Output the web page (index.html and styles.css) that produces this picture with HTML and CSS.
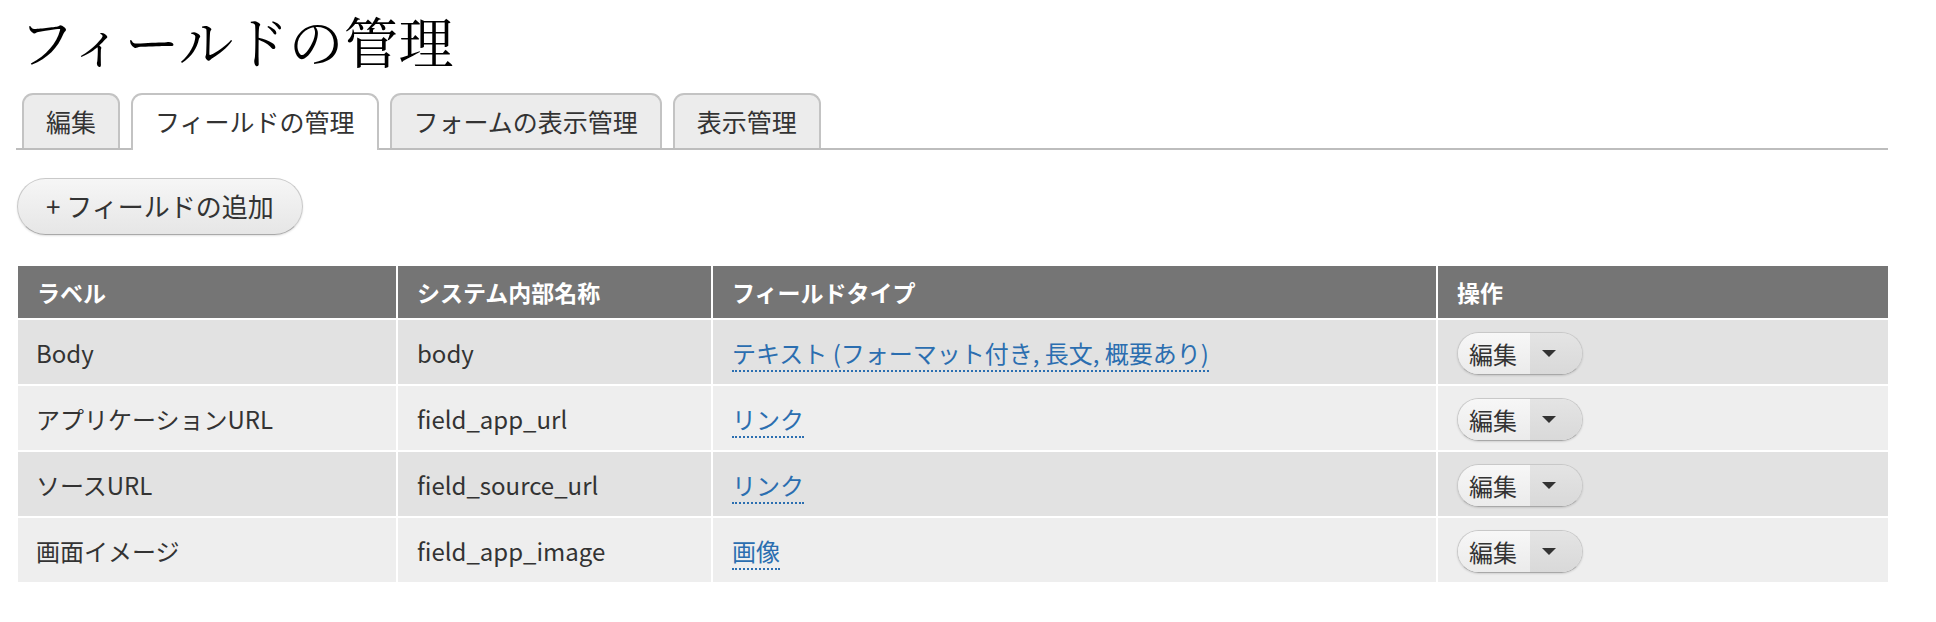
FILE: index.html
```html
<!DOCTYPE html>
<html lang="ja">
<head>
<meta charset="utf-8">
<title>フィールドの管理</title>
<link rel="stylesheet" href="styles.css">
</head>
<body>
<div class="page">
  <h1 class="title">フィールドの管理</h1>
  <ul class="tabs">
    <li class="tab">編集</li>
    <li class="tab tab-active">フィールドの管理</li>
    <li class="tab">フォームの表示管理</li>
    <li class="tab">表示管理</li>
  </ul>
  <div class="actions">
    <a class="add-button">+ フィールドの追加</a>
  </div>
  <table class="fields">
    <thead>
      <tr>
        <th class="c1">ラベル</th>
        <th class="c2">システム内部名称</th>
        <th class="c3">フィールドタイプ</th>
        <th class="c4">操作</th>
      </tr>
    </thead>
    <tbody>
      <tr class="odd">
        <td>Body</td>
        <td>body</td>
        <td><a class="type-link">テキスト (フォーマット付き, 長文, 概要あり)</a></td>
        <td><span class="dropbutton"><span class="drop-main">編集</span><span class="drop-toggle"><span class="caret"></span></span></span></td>
      </tr>
      <tr class="even">
        <td>アプリケーションURL</td>
        <td>field_app_url</td>
        <td><a class="type-link">リンク</a></td>
        <td><span class="dropbutton"><span class="drop-main">編集</span><span class="drop-toggle"><span class="caret"></span></span></span></td>
      </tr>
      <tr class="odd">
        <td>ソースURL</td>
        <td>field_source_url</td>
        <td><a class="type-link">リンク</a></td>
        <td><span class="dropbutton"><span class="drop-main">編集</span><span class="drop-toggle"><span class="caret"></span></span></span></td>
      </tr>
      <tr class="even">
        <td>画面イメージ</td>
        <td>field_app_image</td>
        <td><a class="type-link">画像</a></td>
        <td><span class="dropbutton"><span class="drop-main">編集</span><span class="drop-toggle"><span class="caret"></span></span></span></td>
      </tr>
    </tbody>
  </table>
</div>
</body>
</html>
```
FILE: styles.css
```css
* { box-sizing: border-box; }

html, body {
  margin: 0;
  padding: 0;
  background: #fff;
}

body {
  font-family: "Noto Sans CJK JP", "Noto Sans", sans-serif;
  color: #333;
}

.page {
  padding: 0 48px 0 16px;
}

.title {
  margin: 0;
  padding: 0 0 0 3px;
  font-family: "Noto Serif CJK JP", "IPAMincho", "Liberation Serif", "Noto Sans CJK JP", serif;
  font-weight: normal;
  font-size: 55px;
  line-height: 80px;
  color: #000;
}

.tabs {
  list-style: none;
  margin: 13px 0 0 0;
  padding: 0 0 0 6px;
  display: flex;
  gap: 11px;
  border-bottom: 2px solid #bdbdbd;
}

.tab {
  font-size: 25px;
  line-height: 33px;
  padding: 10px 22px 10px;
  border: 2px solid #c3c3c3;
  border-bottom: 0;
  border-radius: 11px 11px 0 0;
  background: #ececec;
  color: #333;
}

.tab-active {
  background: #fff;
  margin-bottom: -2px;
  padding-bottom: 12px;
}

.actions {
  padding: 28px 0 0 1px;
}

.add-button {
  display: inline-block;
  height: 57px;
  padding: 0 28px;
  font-size: 26px;
  line-height: 53px;
  color: #333;
  border: 1px solid #c9c9c9;
  border-bottom-color: #a9a9a9;
  border-radius: 30px;
  background: linear-gradient(#f6f6f6, #e6e6e6);
  box-shadow: 0 1px 2px rgba(0, 0, 0, 0.12);
}

.fields {
  margin: 31px 0 0 2px;
  width: calc(100% - 2px);
  border-collapse: separate;
  border-spacing: 0;
  table-layout: fixed;
}

.fields th {
  background: #757575;
  color: #fff;
  font-weight: bold;
  font-size: 23px;
  text-align: left;
  height: 54px;
  padding: 0 18px 0 19px;
  border-right: 2px solid #fff;
  border-bottom: 2px solid #fff;
}

.fields th.c1 { width: 380px; }
.fields th.c2 { width: 315px; }
.fields th.c3 { width: 725px; }
.fields th.c4 { border-right: 0; }

.fields td {
  font-size: 24px;
  height: 66px;
  padding: 0 18px 0 19px;
  vertical-align: middle;
  border-right: 2px solid #fff;
  border-bottom: 2px solid #fff;
}

.fields td:first-child { padding-left: 18px; }
.fields td:last-child { border-right: 0; }

.fields tr.odd td { background: #e2e2e2; }
.fields tr.even td { background: #eeeeee; }

.type-link {
  color: #2b6eb0;
  text-decoration: none;
  border-bottom: 2px dotted #2b6eb0;
}

.dropbutton {
  display: inline-flex;
  height: 43px;
  margin-top: 2px;
  border: 1px solid #c8c8c8;
  border-bottom-color: #a8a8a8;
  border-radius: 22px;
  overflow: hidden;
  box-shadow: 0 1px 2px rgba(0, 0, 0, 0.12);
}

.drop-main {
  width: 72px;
  padding-left: 11px;
  font-size: 24px;
  line-height: 41px;
  color: #333;
  background: linear-gradient(#f7f7f7, #ebebeb);
}

.drop-toggle {
  width: 52px;
  display: flex;
  align-items: center;
  padding-left: 12px;
  background: linear-gradient(#e4e4e4, #d9d9d9);
}

.caret {
  width: 0;
  height: 0;
  border-left: 7px solid transparent;
  border-right: 7px solid transparent;
  border-top: 7px solid #333;
}
```
